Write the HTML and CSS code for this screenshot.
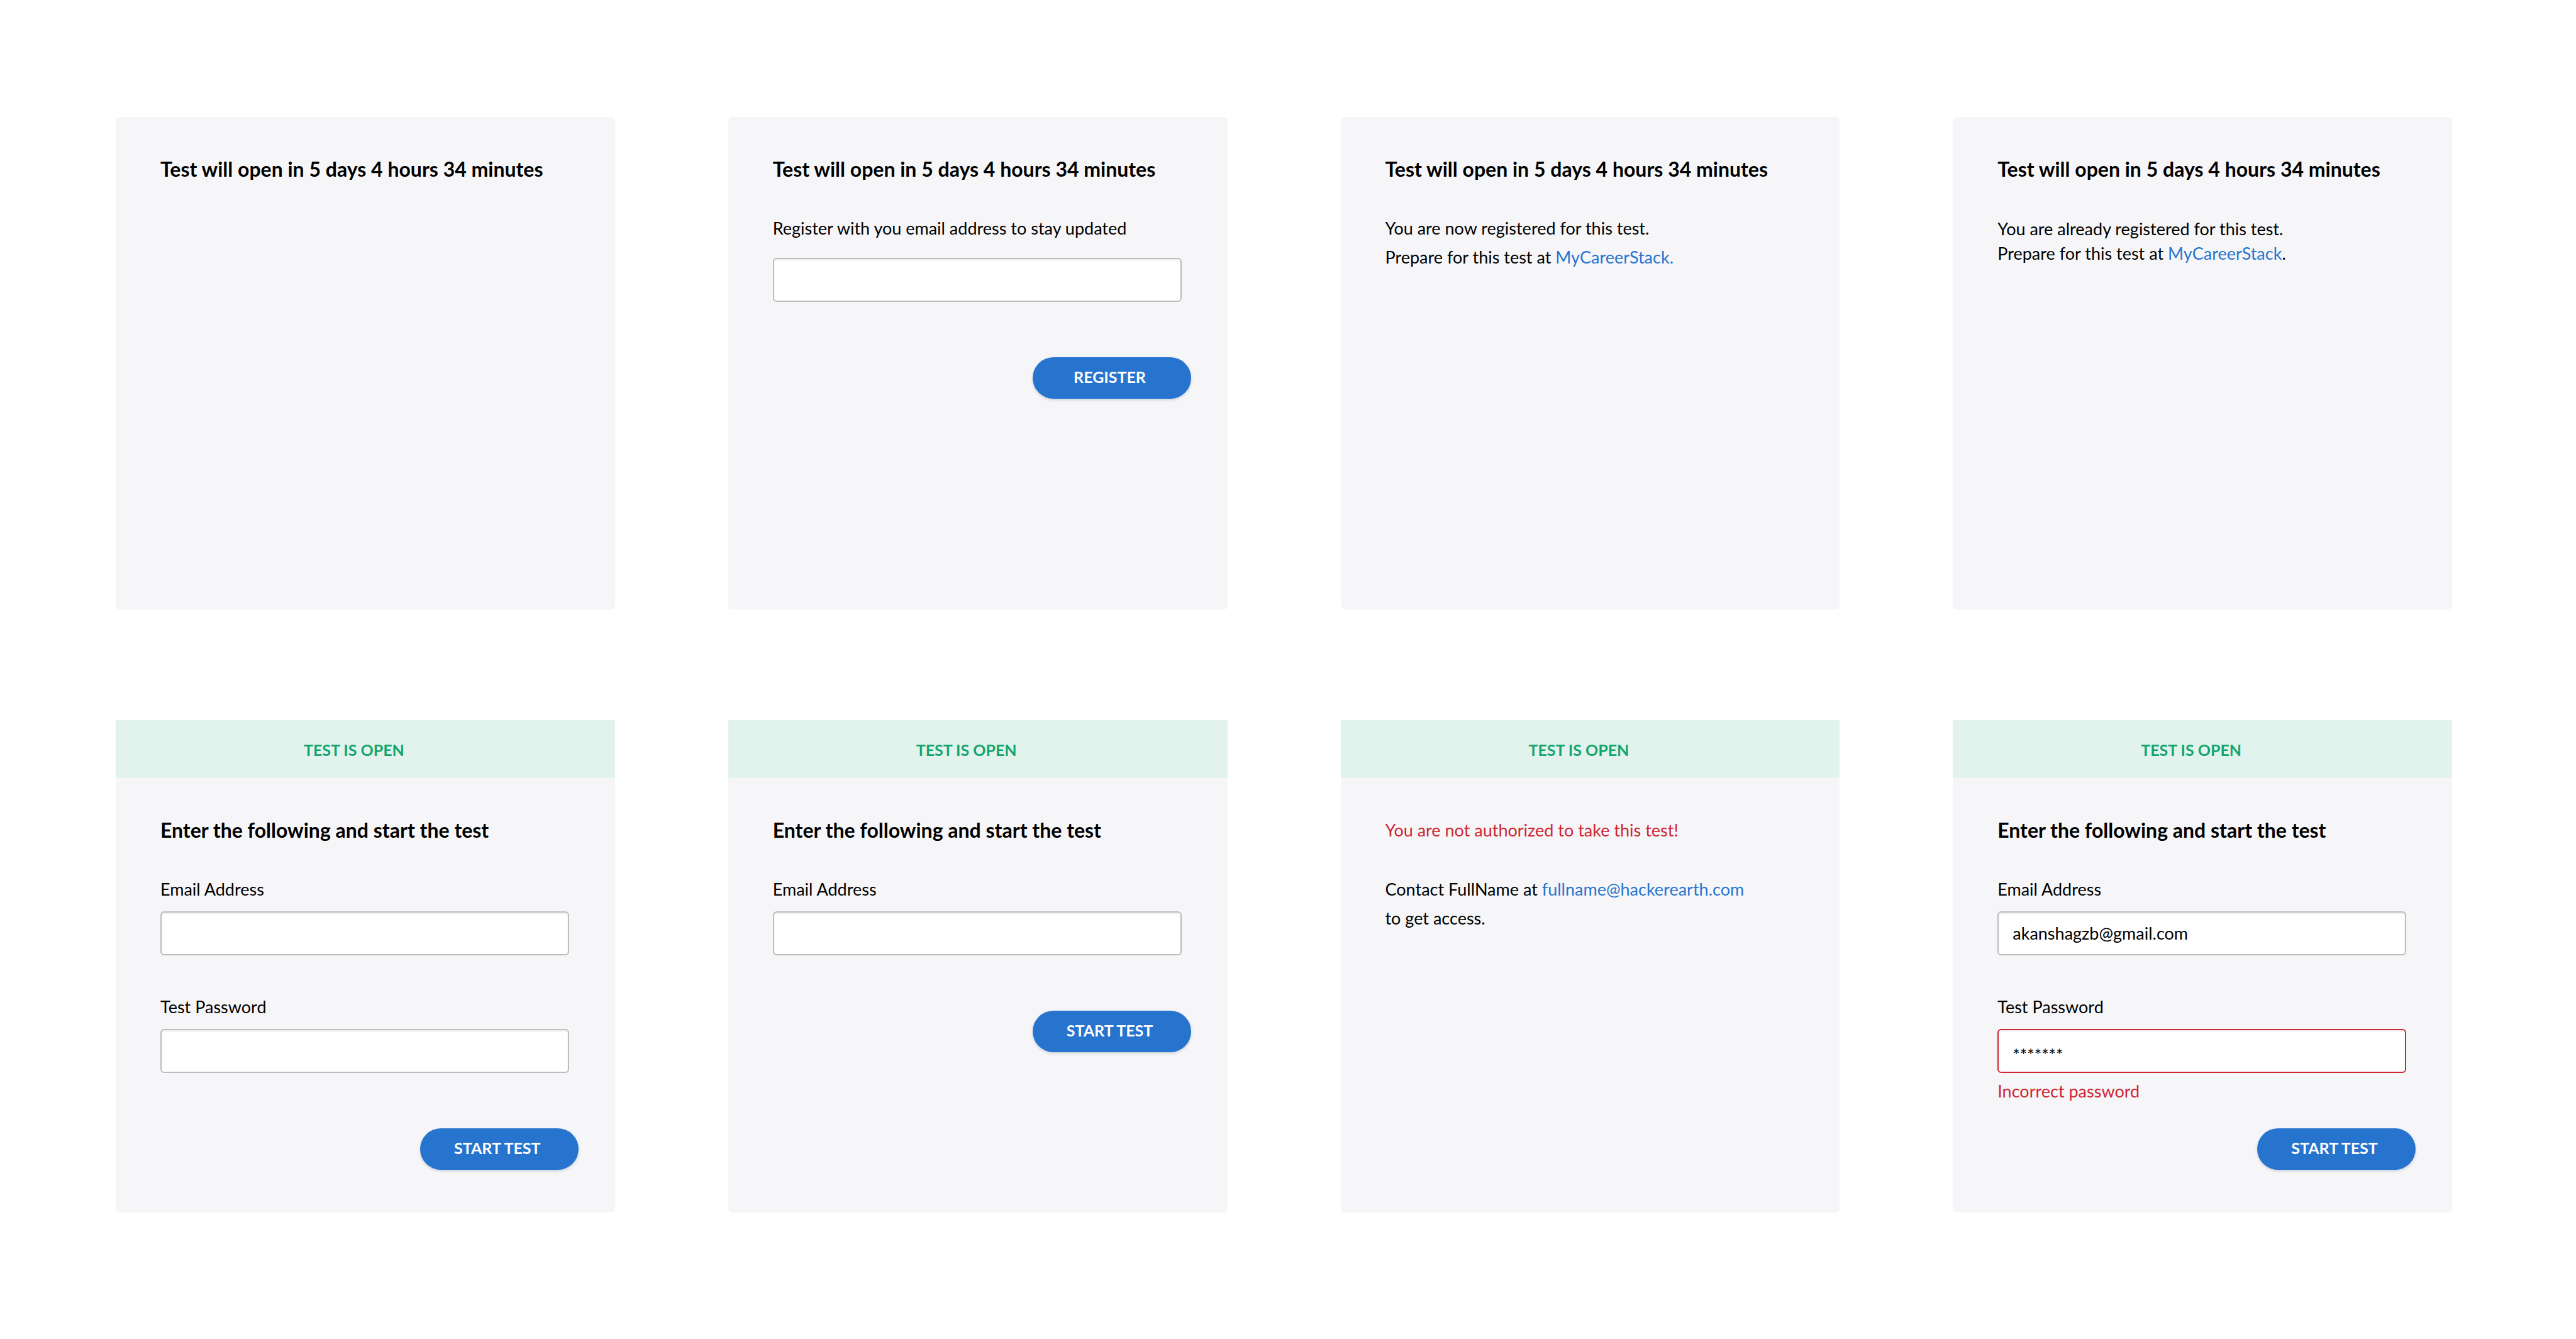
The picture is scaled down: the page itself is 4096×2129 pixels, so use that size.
FILE: index.html
```html
<!DOCTYPE html>
<html lang="en">
<head>
<meta charset="utf-8">
<title>Test access states</title>
<link rel="stylesheet" href="styles.css">
</head>
<body>
<main class="board">
  <section class="card">
    <div class="card-body">
      <h2 class="title">Test will open in 5 days 4 hours 34 minutes</h2>
    </div>
  </section>

  <section class="card">
    <form class="card-body">
      <h2 class="title">Test will open in 5 days 4 hours 34 minutes</h2>
      <div class="field field-spacious">
        <label class="text" for="register-email">Register with you email address to stay updated</label>
        <input class="input" id="register-email" type="email">
        <p class="text note"></p>
      </div>
      <button class="button" type="button">REGISTER</button>
    </form>
  </section>

  <section class="card">
    <div class="card-body">
      <h2 class="title">Test will open in 5 days 4 hours 34 minutes</h2>
      <p class="text">You are now registered for this test.<br>Prepare for this test at <a class="link" href="#">MyCareerStack.</a></p>
    </div>
  </section>

  <section class="card">
    <div class="card-body">
      <h2 class="title">Test will open in 5 days 4 hours 34 minutes</h2>
      <p class="text text-compact">You are already registered for this test.<br>Prepare for this test at <a class="link" href="#">MyCareerStack</a>.</p>
    </div>
  </section>

  <section class="card">
    <p class="banner">TEST IS OPEN</p>
    <form class="card-body">
      <h2 class="title">Enter the following and start the test</h2>
      <div class="field">
        <label class="text" for="start-email">Email Address</label>
        <input class="input" id="start-email" type="email">
        <p class="text note"></p>
      </div>
      <div class="field">
        <label class="text" for="start-password">Test Password</label>
        <input class="input" id="start-password" type="password">
        <p class="text note"></p>
      </div>
      <button class="button" type="button">START TEST</button>
    </form>
  </section>

  <section class="card">
    <p class="banner">TEST IS OPEN</p>
    <form class="card-body">
      <h2 class="title">Enter the following and start the test</h2>
      <div class="field">
        <label class="text" for="invite-email">Email Address</label>
        <input class="input" id="invite-email" type="email">
        <p class="text note"></p>
      </div>
      <button class="button" type="button">START TEST</button>
    </form>
  </section>

  <section class="card">
    <p class="banner">TEST IS OPEN</p>
    <div class="card-body">
      <h2 class="title title-error">You are not authorized to take this test!</h2>
      <p class="text">Contact FullName at <a class="link" href="#">fullname@hackerearth.com</a><br>to get access.</p>
    </div>
  </section>

  <section class="card">
    <p class="banner">TEST IS OPEN</p>
    <form class="card-body">
      <h2 class="title">Enter the following and start the test</h2>
      <div class="field">
        <label class="text" for="retry-email">Email Address</label>
        <input class="input" id="retry-email" type="email" value="akanshagzb@gmail.com">
        <p class="text note"></p>
      </div>
      <div class="field">
        <label class="text" for="retry-password">Test Password</label>
        <input class="input input-masked input-invalid" id="retry-password" type="text" value="*******" aria-invalid="true" aria-describedby="retry-error">
        <p class="text note" id="retry-error">Incorrect password</p>
      </div>
      <button class="button" type="button">START TEST</button>
    </form>
  </section>
</main>
</body>
</html>
```
FILE: styles.css
```css
* {
  box-sizing: border-box;
}

body,
h2,
p {
  margin: 0;
}

body {
  background: #fff;
  color: #000;
  font-family: Lato, "Open Sans", sans-serif;
}

.board {
  display: grid;
  grid-template-columns: repeat(4, 1fr);
  grid-auto-rows: 1fr;
  gap: 176px 180px;
  min-height: 100vh;
  padding: 186px 197px 201px 184px;
}

.card {
  background: #f6f6f8;
  border-radius: 6px;
}

.banner {
  background: #e2f3ed;
  color: #14a56e;
  font-size: 25px;
  font-weight: 700;
  line-height: 90px;
  padding: 2px 36px 0 0;
  text-align: center;
}

.card-body {
  display: flex;
  flex-direction: column;
  padding: 63px 58px 40px 71px;
}

.title {
  font-size: 32px;
  font-weight: 700;
  line-height: 40px;
  margin-bottom: 51px;
}

.title-error {
  color: #cf2633;
  font-size: 27px;
  font-weight: 400;
}

.text {
  font-size: 27px;
  line-height: 46px;
}

.text-compact {
  line-height: 39px;
  padding-top: 4px;
}

.link {
  color: #2774cf;
  text-decoration: none;
}

.field {
  display: flex;
  flex-direction: column;
  gap: 12px;
  margin-bottom: 7px;
  padding-right: 15px;
}

.field-spacious {
  gap: 24px;
}

.input {
  width: 100%;
  height: 70px;
  padding: 0 22px 2px;
  background: #fff;
  border: 2px solid #bdbdbe;
  border-radius: 6px;
  box-shadow: inset 0 2px 3px rgba(0, 0, 0, 0.08);
  color: #000;
  font-family: inherit;
  font-size: 27px;
}

.input-masked {
  padding-top: 14px;
}

.input-invalid {
  border-color: #cf2633;
}

.note {
  color: #cf2633;
  min-height: 46px;
  margin-top: -6px;
}

.field-spacious .note {
  margin-top: -18px;
}

.button {
  align-self: flex-end;
  width: 252px;
  height: 66px;
  margin-top: 29px;
  padding: 0 6px 4px 0;
  background: #2774cf;
  border: 0;
  border-radius: 33px;
  box-shadow: 0 2px 4px rgba(39, 60, 100, 0.2);
  color: #fff;
  font-family: inherit;
  font-size: 25px;
  font-weight: 700;
}
```
